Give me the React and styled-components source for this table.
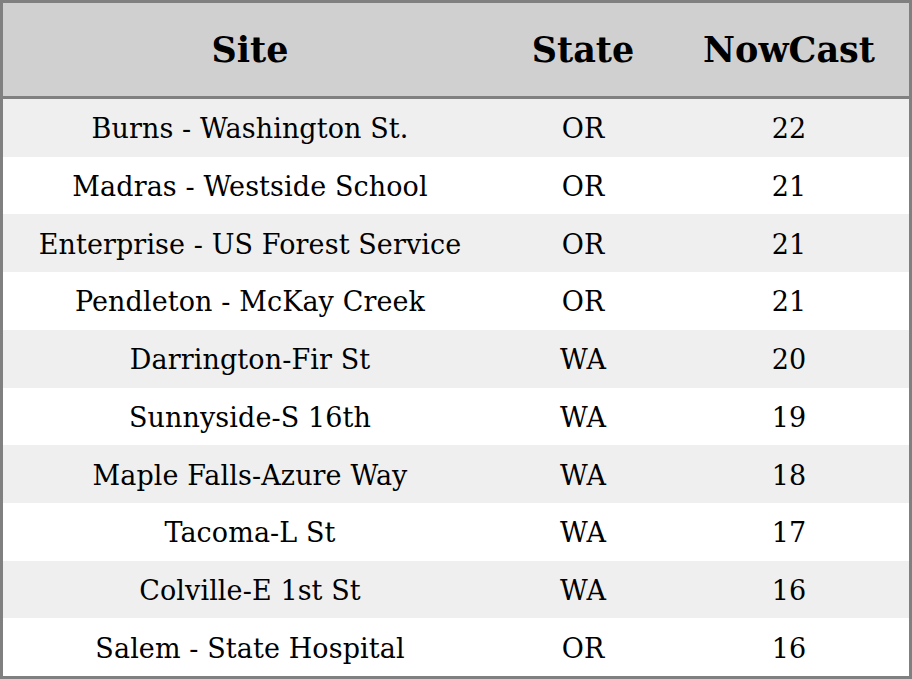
import React from "react";
import styled, { createGlobalStyle } from "styled-components";

const Global = createGlobalStyle`
  html, body { margin: 0; padding: 0; background: #ffffff; }
  #root { width: 912px; height: 679px; }
`;

const Table = styled.div`
  box-sizing: border-box;
  width: 912px;
  height: 679px;
  border: 3px solid #808080;
  display: grid;
  grid-template-columns: 494px 172px 1fr;
  grid-template-rows: 96px repeat(10, 1fr);
  font-family: "DejaVu Serif", serif;
  color: #000;
`;

const HeadCell = styled.div`
  background: #d0d0d0;
  border-bottom: 3px solid #808080;
  display: flex;
  align-items: center;
  justify-content: center;
  font-weight: bold;
  font-size: 35px;
`;

const Cell = styled.div`
  background: ${(p) => (p.$shaded ? "#efefef" : "#ffffff")};
  display: flex;
  align-items: center;
  justify-content: center;
  font-size: 27px;
  letter-spacing: 0.1px;
  padding-top: 2px;
  white-space: nowrap;
`;

const rows = [
  ["Burns - Washington St.", "OR", "22"],
  ["Madras - Westside School", "OR", "21"],
  ["Enterprise - US Forest Service", "OR", "21"],
  ["Pendleton - McKay Creek", "OR", "21"],
  ["Darrington-Fir St", "WA", "20"],
  ["Sunnyside-S 16th", "WA", "19"],
  ["Maple Falls-Azure Way", "WA", "18"],
  ["Tacoma-L St", "WA", "17"],
  ["Colville-E 1st St", "WA", "16"],
  ["Salem - State Hospital", "OR", "16"],
];

export default function App() {
  return (
    <>
      <Global />
      <Table>
        <HeadCell>Site</HeadCell>
        <HeadCell>State</HeadCell>
        <HeadCell>NowCast</HeadCell>
        {rows.map((r, i) =>
          r.map((v, j) => (
            <Cell key={`${i}-${j}`} $shaded={i % 2 === 0}>
              {v}
            </Cell>
          ))
        )}
      </Table>
    </>
  );
}
